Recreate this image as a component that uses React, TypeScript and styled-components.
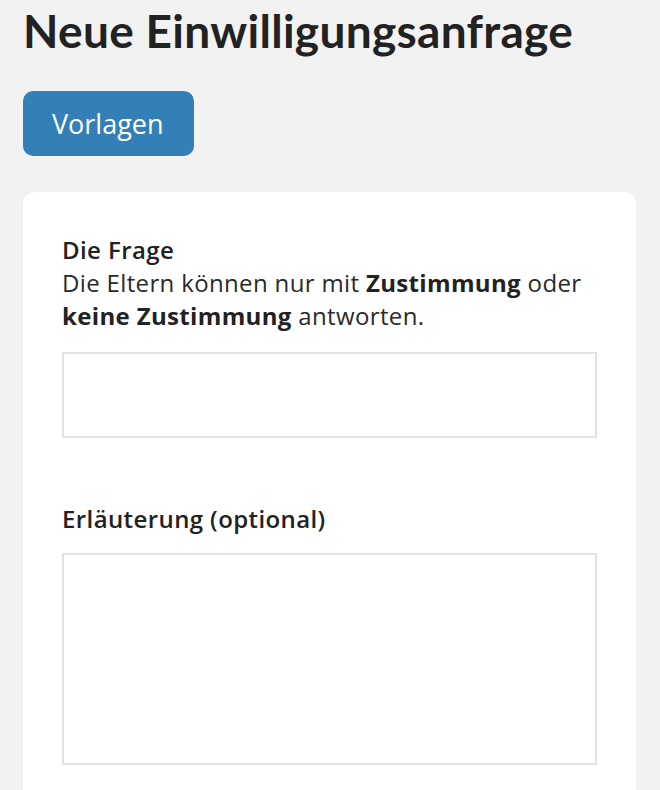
import React from "react";
import styled, { createGlobalStyle } from "styled-components";

const GlobalStyle = createGlobalStyle`
  html, body {
    margin: 0;
    padding: 0;
    background: #f2f2f2;
  }
  body {
    font-family: "Open Sans", "Noto Sans", sans-serif;
    color: #222222;
  }
  * { box-sizing: border-box; }
`;

const Page = styled.main`
  padding: 3px 24px 40px 23px;
  display: flex;
  flex-direction: column;
  align-items: flex-start;
`;

const Title = styled.h1`
  margin: 0;
  font-family: "Lato", "Open Sans", sans-serif;
  font-weight: 700;
  font-size: 46px;
  line-height: 56px;
  letter-spacing: 0.3px;
  color: #222222;
`;

const TemplateButton = styled.button`
  margin-top: 32px;
  height: 65px;
  padding: 0 30px 0 29px;
  display: inline-flex;
  align-items: center;
  border: none;
  border-radius: 10px;
  background: #3380b9;
  color: #ffffff;
  font-family: "Open Sans", sans-serif;
  font-size: 27px;
  font-weight: 400;
  cursor: pointer;
`;

const Card = styled.section`
  margin-top: 36px;
  width: 100%;
  background: #ffffff;
  border-radius: 12px;
  padding: 41px 39px 40px 39px;
  display: flex;
  flex-direction: column;
`;

const Field = styled.div<{ $gap?: number }>`
  display: flex;
  flex-direction: column;
  margin-top: ${(p) => p.$gap ?? 0}px;
`;

const Label = styled.label`
  font-size: 24px;
  line-height: 33px;
  letter-spacing: 0.4px;
  font-weight: 600;
  color: #222222;
`;

const Hint = styled.p`
  margin: 0;
  font-size: 24px;
  line-height: 33px;
  letter-spacing: 0.35px;
  font-weight: 400;
  color: #2a2a2a;

  strong {
    font-weight: 700;
    color: #222222;
  }
`;

const TextBox = styled.div<{ $height: number; $top: number }>`
  margin-top: ${(p) => p.$top}px;
  height: ${(p) => p.$height}px;
  border: 2px solid #e2e2e2;
  background: #ffffff;
  width: 100%;
`;

export default function App() {
  return (
    <>
      <GlobalStyle />
      <Page>
        <Title>Neue Einwilligungsanfrage</Title>
        <TemplateButton type="button">Vorlagen</TemplateButton>
        <Card>
          <Field>
            <Label>Die Frage</Label>
            <Hint>
              Die Eltern können nur mit <strong>Zustimmung</strong> oder{" "}
              <strong>keine Zustimmung</strong> antworten.
            </Hint>
            <TextBox $top={20} $height={86} />
          </Field>
          <Field $gap={64}>
            <Label>Erläuterung (optional)</Label>
            <TextBox $top={18} $height={212} />
          </Field>
        </Card>
      </Page>
    </>
  );
}
